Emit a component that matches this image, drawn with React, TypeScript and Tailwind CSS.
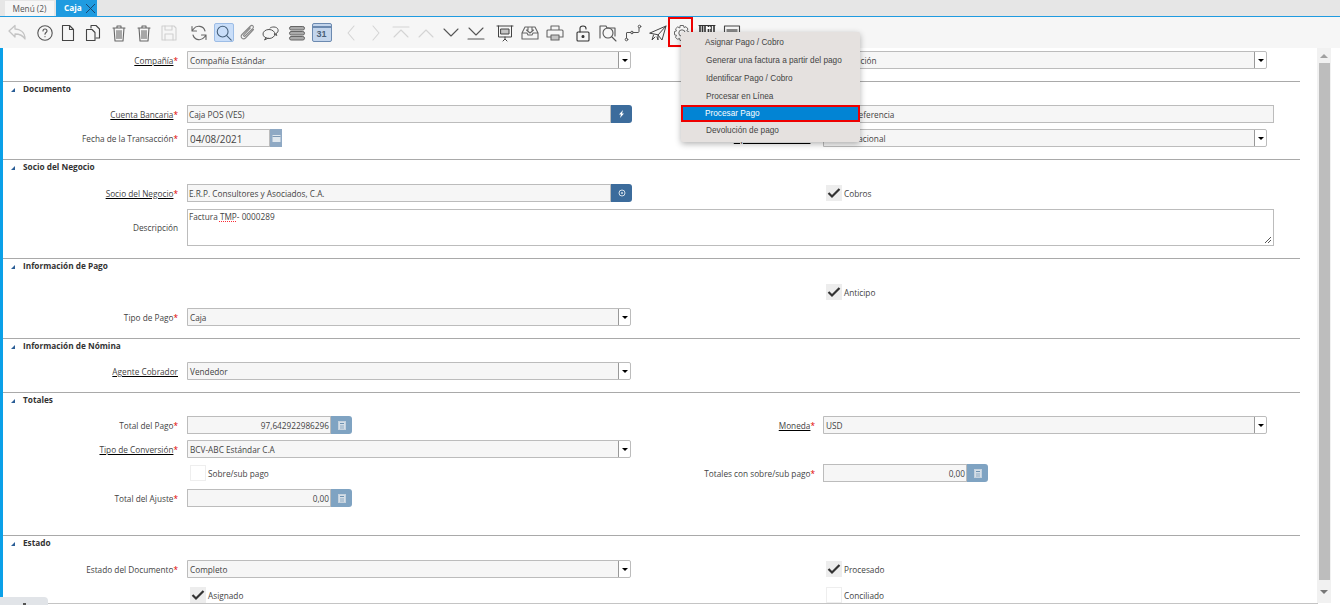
import React from "react";

const S = ({ c = "#555", o = 1, w = 1.1, size = 20, children }: { c?: string; o?: number; w?: number; size?: number; children: React.ReactNode }) => (
  <svg width={size} height={size} viewBox="0 0 20 20" fill="none" stroke={c} strokeWidth={w} strokeLinecap="round" strokeLinejoin="round" opacity={o}>
    {children}
  </svg>
);
const Trash = () => (
  <S c="#666">
    <path d="M4 5h12M8 5V3h4v2M5 5l1 13h8l1-13" />
    <path d="M8 7.5v8M10 7.5v8M12 7.5v8" strokeWidth="1.1" />
  </S>
);
const CalcIcon = () => (
  <svg width="8" height="9" viewBox="0 0 8 9" fill="none"><rect x="0.5" y="0.5" width="7" height="8" fill="#d5dfe8" stroke="#c5d2de" /><path d="M2 2.5h4" stroke="#6f93b2" /><path d="M2 5h4M2 7h4" stroke="#8fabc3" /></svg>
);

function Icons() {
  const spacer = (w: string) => <div className={w} />;
  const b = "flex h-[31px] shrink-0 items-center justify-center";
  return (
    <div className="flex h-[31px] bg-[#f6f6f6] pl-[4px]">
      <div className={`${b} w-[25px]`}><S c="#c4c4c4" w={1.3}><path d="M2 8l6-5.500v3.500c5 0 10 3 10 10-2-3.500-5-5-10-5v3z" /></S></div>
      {spacer("w-[4px]")}
      <div className={`${b} w-[23px]`}><S><circle cx="10" cy="10" r="7.2" /><path d="M8 8c0-2.600 4-2.600 4 0 0 1.500-2 1.600-2 3.200M10 13.600v.2" /></S></div>
      <div className={`${b} w-[24px]`}><S c="#444"><path d="M4.500 2.500h7l4 4v11h-11zM11.500 2.500v4h4" /></S></div>
      <div className={`${b} w-[26px]`}><S c="#444"><path d="M8 5V2.500h5l3.500 3.500v9H13" /><path d="M3.500 6.500H9l3 3v8H3.500z" /></S></div>
      <div className={`${b} w-[25px]`}><Trash /></div>
      <div className={`${b} w-[25px]`}><Trash /></div>
      <div className={`${b} w-[25px]`}><S c="#d0d0d0"><path d="M3 3h12l2 2v12H3z" /><path d="M6 3v4h7V3M6 17v-6h8v6" /></S></div>
      {spacer("w-[5px]")}
      <div className={`${b} w-[25px]`}><S c="#666"><path d="M16 8a6.500 6.500 0 0 0-11.500-2L3 8M3 3.500V8h4.500M4 12a6.500 6.500 0 0 0 11.500 2l1.500-2M17 16.500V12h-4.500" /></S></div>
      <div className={`${b} w-[25px]`}>
        <div className="flex h-[19px] w-[20px] items-center justify-center rounded-[2px] border border-[#9dbde6] bg-[#c9def9]">
          <S c="#46607a" w={1.2} size={18}><circle cx="8.500" cy="8.500" r="6" /><path d="M13 13l5 5" /></S>
        </div>
      </div>
      <div className={`${b} w-[22px]`}><S c="#888"><path d="M16.500 6.500l-8 8.500c-2.500 2.500-6-1-3.500-3.500l8.500-8.500c1.700-1.700 4 .6 2.400 2.400L8 13c-.8.800-2-.3-1.200-1.200l6.500-6.800" /></S></div>
      <div className={`${b} w-[26px]`}><S c="#555" w={1}><ellipse cx="8" cy="11" rx="6" ry="4.500" /><path d="M9 5c1-1.300 7-2 8 1.500.6 2-.6 3.500-2 4l.8 2-2.500-1.300" /><path d="M5 14.500l-1.500 2.500 3.500-1.800" /></S></div>
      <div className={`${b} w-[25px]`}><S c="#666" w={1}><rect x="2.500" y="3.500" width="15" height="3.500" rx="1.700" fill="#aaa" /><rect x="2.500" y="8.500" width="15" height="3.500" rx="1.700" fill="#aaa" /><rect x="2.500" y="13.500" width="15" height="3.500" rx="1.700" fill="#aaa" /></S></div>
      <div className={`${b} w-[25px]`}>
        <div className="flex h-[19px] w-[20px] items-end justify-center rounded-[2px] border border-[#6c8ab0] bg-[#c3d5ec] text-[9px] font-bold leading-[13px] text-[#4a5f78] [font-family:'Liberation_Sans',sans-serif]">
          <span className="w-full border-t-2 border-[#6c8ab0] text-center">31</span>
        </div>
      </div>
      {spacer("w-[4px]")}
      <div className={`${b} w-[25px]`}><S c="#d4d4d4"><path d="M13 3l-6 7 6 7" /></S></div>
      <div className={`${b} w-[25px]`}><S c="#d4d4d4"><path d="M7 3l6 7-6 7" /></S></div>
      <div className={`${b} w-[25px]`}><S c="#d4d4d4"><path d="M2 4h16M3 14l7-7 7 7" /></S></div>
      <div className={`${b} w-[25px]`}><S c="#d4d4d4"><path d="M3 14l7-7 7 7" /></S></div>
      <div className={`${b} w-[25px]`}><S c="#555"><path d="M3 6l7 7 7-7" /></S></div>
      <div className={`${b} w-[25px]`}><S c="#555"><path d="M3 5l7 7 7-7M2 16h16" /></S></div>
      {spacer("w-[4px]")}
      <div className={`${b} w-[25px]`}><S c="#444" w={1}><path d="M2 3h16M3.500 3v11h13V3M10 14v2M8 18l2-2 2 2" /><rect x="6" y="6" width="8" height="5" fill="#c4c4c4" /></S></div>
      <div className={`${b} w-[25px]`}><S c="#666"><path d="M5 4h10l3 6v6H2v-6zM2 10h5l1 2h4l1-2h5M8 4v3H6.500L10 10l3.500-3H12V4" /></S></div>
      <div className={`${b} w-[25px]`}><S c="#666"><path d="M6 7V3h8v4M6 14H2V8c0-.600.500-1 1-1h14c.500 0 1 .400 1 1v6h-4" /><rect x="6" y="12" width="8" height="5" fill="#c4c4c4" /></S></div>
      {spacer("w-[3px]")}
      <div className={`${b} w-[25px]`}><S c="#333"><rect x="4" y="9" width="12" height="9" rx="1" /><path d="M7 9V5.500c0-3.300 6-3.300 6 0V6" /><circle cx="10" cy="13.500" r="1" fill="#333" /></S></div>
      <div className={`${b} w-[25px]`}><S c="#555"><path d="M2 15V3h6l1 2h8v8" /><circle cx="10" cy="10" r="5" /><path d="M14 14l4 4" /></S></div>
      <div className={`${b} w-[25px]`}><S c="#555" w={1}><circle cx="3.500" cy="16.500" r="1.300" /><circle cx="9" cy="9.500" r="1.300" /><circle cx="16.500" cy="3.500" r="1.300" /><path d="M3.500 15V10c0-.500.300-.500.500-.500h3.700M10.300 9.500H15c.500 0 1-.300 1-1V5" /></S></div>
      <div className={`${b} w-[25px]`}><S c="#444" w={1}><path d="M2 10L18 3l-4 14-4-5zM18 3l-8 9v5l-1-3M5.500 12l-1.500 5 3-3" /></S></div>
      <div className={`${b} w-[24px]`}><S c="#666" w={1}><path d="M8.500 2.500h3l.5 2 2-.8 2 2.300-1.200 1.800 2 1v3l-2 .7.800 2-2 2-2-1-.6 2h-3l-.5-2-2 .8-2-2 1-2-2-.5v-3.300l2-.6-1-2 2.200-2 1.800.9z" /><circle cx="10" cy="10" r="3.200" /></S></div>
      <div className={`${b} w-[25px]`}><S c="#333" w={1}><path d="M2 2.500h16" /><path d="M3 3v14M5.500 3v14M8 3v14M11.500 3v14M14 3v14M17 3v14" strokeWidth="1.600" strokeLinecap="butt" /><path d="M10 5h3" stroke="#fff" strokeWidth="2" /></S></div>
      <div className={`${b} w-[25px]`}><S c="#444"><rect x="2.500" y="3" width="15" height="14" /><rect x="4.500" y="6" width="11" height="7" fill="#888" stroke="none" /></S></div>
    </div>
  );
}

const Star = () => <span className="text-[#e00000]">*</span>;
const Lab = ({ t, link, req, w = "w-[175px]", pad = "pt-[2px]" }: { t: string; link?: boolean; req?: boolean; w?: string; pad?: string }) => (
  <div className={`${w} ${pad} shrink-0 text-right`}>
    <span className={link ? "underline decoration-black underline-offset-1" : ""}>{t}</span>
    {req && <Star />}
  </div>
);
const inputCls = "flex h-[18px] items-center border border-[#bcbcbc] bg-[#f6f6f6] px-[1px] pt-[2px] text-[#444]";

const Select = ({ v, w }: { v: string; w: string }) => (
  <div className={`${inputCls} ${w} relative rounded-r-[2px] pr-0`}>
    <span className="flex-1 pl-px">{v}</span>
    <span className="absolute inset-y-0 right-0 flex w-[12px] items-center justify-center rounded-r-[2px] border-l border-[#999] bg-white">
      <span className="h-0 w-0 border-x-[3px] border-t-[3px] border-x-transparent border-t-black" />
    </span>
  </div>
);
const Text = ({ v, w }: { v: string; w: string }) => <div className={`${inputCls} ${w} pl-[1px]`}>{v}</div>;
const Num = ({ v }: { v: string }) => (
  <div className="flex items-center">
    <div className={`${inputCls} w-[144px] justify-end pr-[1px]`}>{v}</div>
    <div className="flex h-[18px] w-[21px] items-center justify-center rounded-r-[3px] bg-[#7fa3c2]"><CalcIcon /></div>
  </div>
);
const Check = ({ t, on }: { t: string; on?: boolean }) => (
  <div className="flex items-center gap-[2px] pl-[3px]">
    <div className={`flex h-[16px] w-[16px] items-center justify-center ${on ? "bg-[#ededed]" : "border border-[#eeeeee] bg-white"}`}>
      {on && (
        <svg width="14" height="12" viewBox="0 0 14 12" fill="none"><path d="M1.500 6l3.500 3.500L12.500 2" stroke="#333" strokeWidth="2.200" /></svg>
      )}
    </div>
    <span className="pt-[2px]">{t}</span>
  </div>
);

const Row = ({ mt, left, right }: { mt: string; left?: React.ReactNode; right?: React.ReactNode }) => (
  <div className={`${mt} flex h-[18px] items-center`}>
    <div className="flex w-[630px] shrink-0 items-center gap-[9px]">{left}</div>
    <div className="flex items-center gap-[8px]">{right}</div>
  </div>
);
const L = ({ l, link, req, children }: { l?: string; link?: boolean; req?: boolean; children: React.ReactNode }) => (
  <>
    <Lab t={l ?? ""} link={link} req={req} />
    {children}
  </>
);
const R = ({ l, link, req, children }: { l?: string; link?: boolean; req?: boolean; children: React.ReactNode }) => (
  <>
    <Lab t={l ?? ""} link={link} req={req} w="w-[182px]" />
    {children}
  </>
);
const Sec = ({ t, mt, children }: { t: string; mt: string; children: React.ReactNode }) => (
  <div className={`${mt} w-[1297px] border-t border-[#a9a9a9]`}>
    <div className="flex h-[14px] items-center pl-[8px] font-bold text-[#333]">
      <span className="mr-[8px] mt-[2px] h-0 w-0 border-b-[4px] border-l-[4px] border-b-[#2a5d96] border-l-transparent" />
      <span>{t}</span>
    </div>
    {children}
  </div>
);

export default function App() {
  return (
    <div className="relative h-[605px] w-[1340px] overflow-hidden bg-white text-[8.25px] leading-[12px] text-[#444] [font-family:'Open_Sans',sans-serif]">
      <div className="flex h-[17px] items-end border-b border-[#1f9be0] bg-[#e6e6e6] pl-[5px]">
        <div className="flex h-[15px] w-[49px] items-center justify-center bg-[#f6f6f6] text-[#555]">Menú (2)</div>
        <div className="ml-[2px] flex h-[16px] w-[41px] items-center justify-between bg-[#1f9be0] pl-[8px] pr-[1px] font-bold text-white">
          Caja
          <svg width="11" height="11" viewBox="0 0 11 11"><path d="M1 1l9 9M10 1l-9 9" stroke="#1c3f66" strokeWidth="0.900" /></svg>
        </div>
      </div>
      <Icons />
      <div className="flex h-[557px]">
        <div className="w-[3px] shrink-0 bg-[#0aa0e8]" />
        <div className="w-[1297px] shrink-0 overflow-hidden">
          <Row mt="mt-[3px]" left={<L l="Compañía" link req><Select v="Compañía Estándar" w="w-[444px]" /></L>} right={<R l="Organización" link req><Select v="Organización" w="w-[444px]" /></R>} />
          <Sec t="Documento" mt="mt-[12px]">
            <Row mt="mt-[9px]"
              left={<L l="Cuenta Bancaria" link req><div className="flex items-center"><Text v="Caja POS (VES)" w="w-[424px]" /><div className="flex h-[18px] w-[21px] items-center justify-center rounded-r-[3px] bg-[#3c6c9c]"><svg width="7" height="8" viewBox="0 0 7 8"><path d="M5 0L1 4.500h2L2 8l4-4.500H4z" fill="#fff" /></svg></div></div></L>}
              right={<R l="Nro de Referencia"><Text v="Nro de Referencia" w="w-[451px]" /></R>} />
            <Row mt="mt-[6px]"
              left={<L l="Fecha de la Transacción" req><div className="flex items-center"><div className={`${inputCls} w-[83px] pl-[2px] text-[9.9px]`}>04/08/2021</div><div className="flex h-[18px] w-[12px] items-center justify-center bg-[#8fa9c4]"><svg width="9" height="9" viewBox="0 0 9 9"><rect x="0.500" y="1" width="8" height="7" fill="#dfe7ee" /><path d="M0.500 2.500h8" stroke="#7d98b4" /></svg></div></div></L>}
              right={<R l="Tipo de Transacción" link req><Select v="Banco Nacional" w="w-[444px]" /></R>} />
          </Sec>
          <Sec t="Socio del Negocio" mt="mt-[12px]">
            <Row mt="mt-[10px]"
              left={<L l="Socio del Negocio" link req><div className="flex items-center"><Text v="E.R.P. Consultores y Asociados, C.A." w="w-[424px]" /><div className="flex h-[18px] w-[21px] items-center justify-center rounded-r-[3px] bg-[#3c6c9c]"><svg width="8" height="8" viewBox="0 0 8 8" fill="none"><circle cx="4" cy="4" r="3" stroke="#d5e0ea" /><circle cx="4" cy="4" r="1" fill="#d5e0ea" /></svg></div></div></L>}
              right={<div className="ml-[190px]"><Check t="Cobros" on /></div>} />
            <div className="mt-[7px] flex h-[37px] items-center gap-[9px]">
              <Lab t="Descripción" pad="pt-0" />
              <div className="relative h-[37px] w-[1087px] border border-[#bcbcbc] bg-white px-[1px] pt-[1px] text-[#444]">
                Factura <span className="underline decoration-dotted decoration-red-500">TMP</span>- 0000289
                <svg className="absolute bottom-[1px] right-[1px]" width="8" height="8" viewBox="0 0 8 8"><path d="M1 7l6-6M4 7l3-3" stroke="#555" /></svg>
              </div>
            </div>
          </Sec>
          <Sec t="Información de Pago" mt="mt-[12px]">
            <Row mt="mt-[10px]" right={<div className="ml-[190px]"><Check t="Anticipo" on /></div>} />
            <Row mt="mt-[7px]" left={<L l="Tipo de Pago" req><Select v="Caja" w="w-[444px]" /></L>} />
          </Sec>
          <Sec t="Información de Nómina" mt="mt-[12px]">
            <Row mt="mt-[9px]" left={<L l="Agente Cobrador" link><Select v="Vendedor" w="w-[444px]" /></L>} />
          </Sec>
          <Sec t="Totales" mt="mt-[12px]">
            <Row mt="mt-[9px]" left={<L l="Total del Pago" req><Num v="97,642922986296" /></L>} right={<R l="Moneda" link req><Select v="USD" w="w-[444px]" /></R>} />
            <Row mt="mt-[6px]" left={<L l="Tipo de Conversión" link req><Select v="BCV-ABC Estándar C.A" w="w-[444px]" /></L>} />
            <Row mt="mt-[6px]" left={<L><Check t="Sobre/sub pago" /></L>} right={<R l="Totales con sobre/sub pago" req><Num v="0,00" /></R>} />
            <Row mt="mt-[7px]" left={<L l="Total del Ajuste" req><Num v="0,00" /></L>} />
          </Sec>
          <Sec t="Estado" mt="mt-[28px]">
            <Row mt="mt-[10px]" left={<L l="Estado del Documento" req><Select v="Completo" w="w-[444px]" /></L>} right={<div className="ml-[190px]"><Check t="Procesado" on /></div>} />
            <Row mt="mt-[8px]" left={<L><Check t="Asignado" on /></L>} right={<div className="ml-[190px]"><Check t="Conciliado" /></div>} />
          </Sec>
        </div>
        <div className="ml-[17px] flex h-[555px] w-[14px] shrink-0 flex-col items-center bg-[#f1f1f1]">
          <div className="flex h-[15px] items-center"><span className="h-0 w-0 border-x-[4px] border-b-[4px] border-x-transparent border-b-[#a0a0a0]" /></div>
          <div className="h-[517px] w-[11px] bg-[#bdbdbd]" />
          <div className="flex flex-1 items-center"><span className="h-0 w-0 border-x-[4px] border-t-[4px] border-x-transparent border-t-[#777]" /></div>
        </div>
      </div>
      <div className="absolute bottom-0 left-0 flex h-[8px] w-[48px] items-end justify-center rounded-tr-[4px] bg-[#e1e4e8]"><span className="h-[2px] w-[3px] bg-[#555]" /></div>
      <div className="absolute bottom-[1px] left-[48px] h-px w-[1270px] bg-[#c4c4c4]" />
      <div className="absolute left-[668px] top-[17px] h-[30px] w-[25px] border-2 border-[#ee0000]" />
      <div className="absolute left-[681px] top-[32px] flex h-[110px] w-[179px] flex-col rounded-[2px] bg-[#e5e1df] pt-[2px] text-[8.25px] text-[#444] shadow-[0_2px_6px_rgba(0,0,0,0.3)] [font-family:'Liberation_Sans',sans-serif]">
        <div className="flex h-[18px] shrink-0 items-center pl-[24px]">Asignar Pago / Cobro</div>
        <div className="flex h-[18px] shrink-0 items-center pl-[25px]">Generar una factura a partir del pago</div>
        <div className="flex h-[18px] shrink-0 items-center pl-[25px]">Identificar Pago / Cobro</div>
        <div className="flex h-[17px] shrink-0 items-center pl-[25px]">Procesar en Línea</div>
        <div className="flex h-[17px] shrink-0 items-center border-2 border-[#ee0000] bg-[#0284d4] pl-[22px] text-white">Procesar Pago</div>
        <div className="flex h-[17px] shrink-0 items-center pl-[25px]">Devolución de pago</div>
      </div>
    </div>
  );
}
